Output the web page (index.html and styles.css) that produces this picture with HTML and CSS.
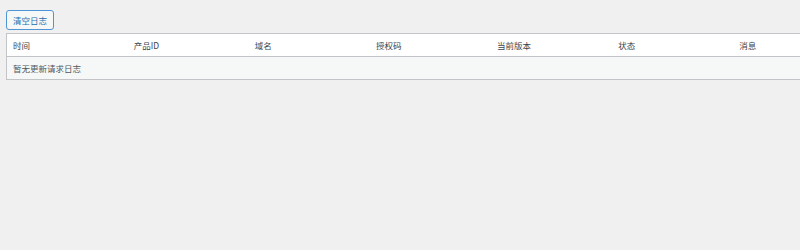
FILE: index.html
```html
<!DOCTYPE html>
<html lang="zh-CN">
<head>
  <meta charset="UTF-8">
  <meta name="viewport" content="width=device-width, initial-scale=1.0">
  <title>更新请求日志</title>
  <link rel="stylesheet" href="styles.css">
</head>
<body>
  <div class="wrap">
    <button class="button">清空日志</button>

    <table class="log-table">
      <thead>
        <tr>
          <th>时间</th>
          <th>产品ID</th>
          <th>域名</th>
          <th>授权码</th>
          <th>当前版本</th>
          <th>状态</th>
          <th>消息</th>
        </tr>
      </thead>
      <tbody>
        <tr>
          <td colspan="7">暂无更新请求日志</td>
        </tr>
      </tbody>
    </table>
  </div>
</body>
</html>
```

FILE: styles.css
```css
html, body {
  margin: 0;
  background-color: #f0f0f1;
  font-family: "Noto Sans CJK SC", "Noto Sans", sans-serif;
  font-size: 8.5px;
  color: #3c434a;
  overflow: hidden;
}
.wrap {
  padding: 10px 0 0 6px;
}
.button {
  display: block;
  height: 20px;
  padding: 0 6px;
  font-family: inherit;
  font-size: 8.5px;
  color: #2271b1;
  background-color: #f6f7f7;
  border: 1px solid #4f94d4;
  border-radius: 3px;
  cursor: pointer;
}
.log-table {
  margin-top: 3px;
  width: 849px;
  table-layout: fixed;
  border-collapse: collapse;
  border: 1px solid #c3c4c7;
}
.log-table th {
  height: 22px;
  padding: 0 6px;
  text-align: left;
  font-weight: normal;
  color: #3c434a;
  background-color: #fff;
  border-bottom: 1px solid #c3c4c7;
}
.log-table td {
  height: 22px;
  padding: 0 6px;
  color: #50575e;
  background-color: #f6f7f7;
}
```
